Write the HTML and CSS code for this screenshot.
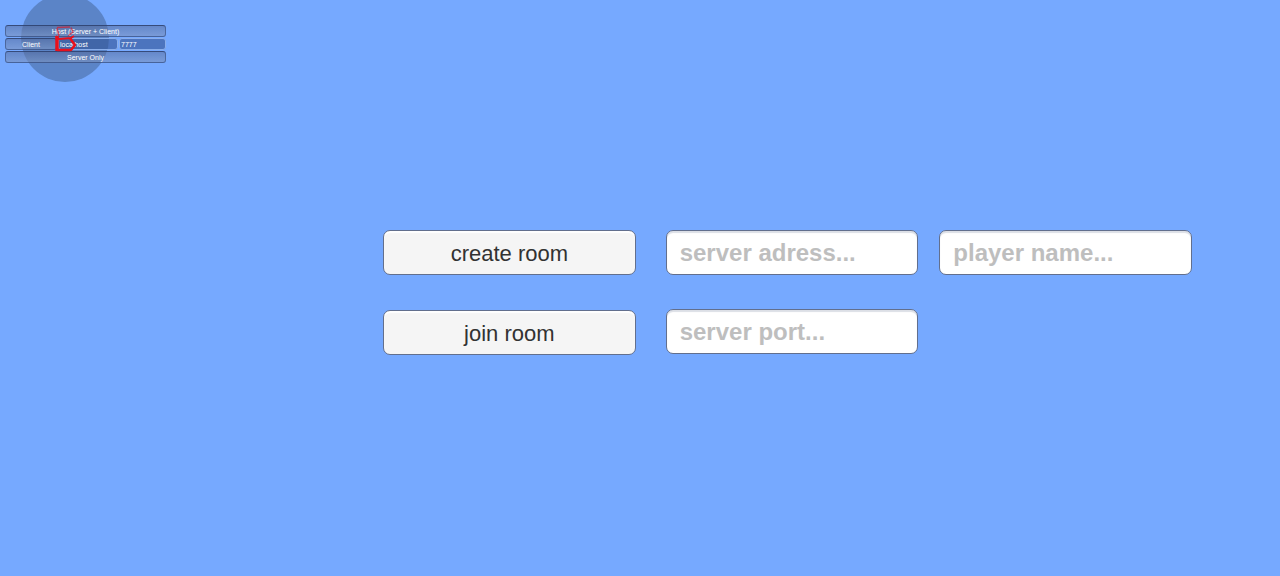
FILE: index.html
```html
<!DOCTYPE html>
<html lang="en">
<head>
<meta charset="utf-8">
<meta name="viewport" content="width=device-width, initial-scale=1">
<title>Room lobby</title>
<link rel="stylesheet" href="styles.css">
</head>
<body>
<div class="joystick"></div>
<header class="hud">
  <button class="hud-button" type="button">Host (Server + Client)</button>
  <div class="hud-row">
    <button class="hud-button" type="button">Client</button>
    <input class="hud-field" type="text" value="localhost" aria-label="Network address">
    <input class="hud-field" type="text" value="7777" aria-label="Network port">
  </div>
  <button class="hud-button" type="button">Server Only</button>
  <svg class="marker" viewBox="0 0 22 28" aria-hidden="true">
    <g fill="none" stroke="#e8101c" stroke-linejoin="round">
      <path d="M3 2.500L16 2M3 3L5 11M17 2.500L19 7L14 11" stroke-width="1.500" opacity=".6"/>
      <path d="M2 11L5 14L17 13L20 11" stroke-width="2"/>
      <path d="M3 11L3 26" stroke-width="3.500"/>
      <path d="M3 25L17 25L21 20L18 16L16 13" stroke-width="2.500"/>
    </g>
  </svg>
</header>
<main class="lobby">
  <div class="actions">
    <button class="room-button" type="button">create room</button>
    <button class="room-button" type="button">join room</button>
  </div>
  <div class="server">
    <input class="room-field" type="text" placeholder="server adress..." aria-label="Server address">
    <input class="room-field" type="text" placeholder="server port..." aria-label="Server port">
  </div>
  <div class="player">
    <input class="room-field" type="text" placeholder="player name..." aria-label="Player name">
  </div>
</main>
</body>
</html>
```
FILE: styles.css
```css
* { box-sizing: border-box; }

body {
  margin: 0;
  min-height: 100vh;
  overflow-x: hidden;
  background: #76a9ff;
  font-family: "Liberation Sans", Arial, sans-serif;
}

button, input {
  margin: 0;
  min-width: 0;
  font-family: inherit;
}

.joystick {
  position: absolute;
  top: -6px;
  left: 21px;
  width: 88px;
  height: 88px;
  border-radius: 50%;
  background: #5b84c7;
}

.hud {
  position: relative;
  display: flex;
  flex-direction: column;
  gap: 1px;
  width: 171px;
  padding: 25px 5px 0;
}

.hud-row {
  display: grid;
  grid-template-columns: 52px 60px 1fr;
  gap: 1px;
}

.hud-button, .hud-field {
  height: 12px;
  border: 1px solid rgba(52, 74, 122, 0.6);
  border-radius: 3px;
  color: #fff;
  font-size: 7px;
  line-height: 10px;
}

.hud-button {
  padding: 1px 2px 0;
  border-top-color: rgba(38, 56, 100, 0.8);
  background: linear-gradient(rgba(84, 104, 150, 0.5), rgba(124, 146, 190, 0.6));
}

.hud-field {
  padding: 0 1px;
  border-color: #8aaeea;
  background: rgba(48, 82, 146, 0.6);
}

.marker {
  position: absolute;
  top: 25px;
  left: 54px;
  width: 22px;
  height: 28px;
  pointer-events: none;
}

.lobby {
  display: grid;
  grid-template-columns: repeat(3, 1fr);
  padding: 167px 88px 24px 383px;
}

.actions, .server, .player {
  display: flex;
  flex-direction: column;
}

.actions { gap: 35px; margin-right: 17px; }
.server { gap: 34px; margin: 0 4px 0 13px; }
.player { margin-left: 17px; }

.room-button, .room-field {
  width: 100%;
  height: 45px;
  border: 1px solid #626f8d;
  border-radius: 7px;
  font-size: 22px;
}

.room-button {
  padding: 2px 6px 0;
  background: #f5f5f5;
  color: #323232;
  box-shadow: inset 0 2px 1px #fff;
}

.room-field {
  padding: 2px 13px 0;
  background: #fff;
  box-shadow: inset 0 2px 1px #dcdfe6;
}

.room-field::placeholder {
  color: #bebebe;
  opacity: 1;
  font-size: 24px;
  font-weight: 700;
}
```
